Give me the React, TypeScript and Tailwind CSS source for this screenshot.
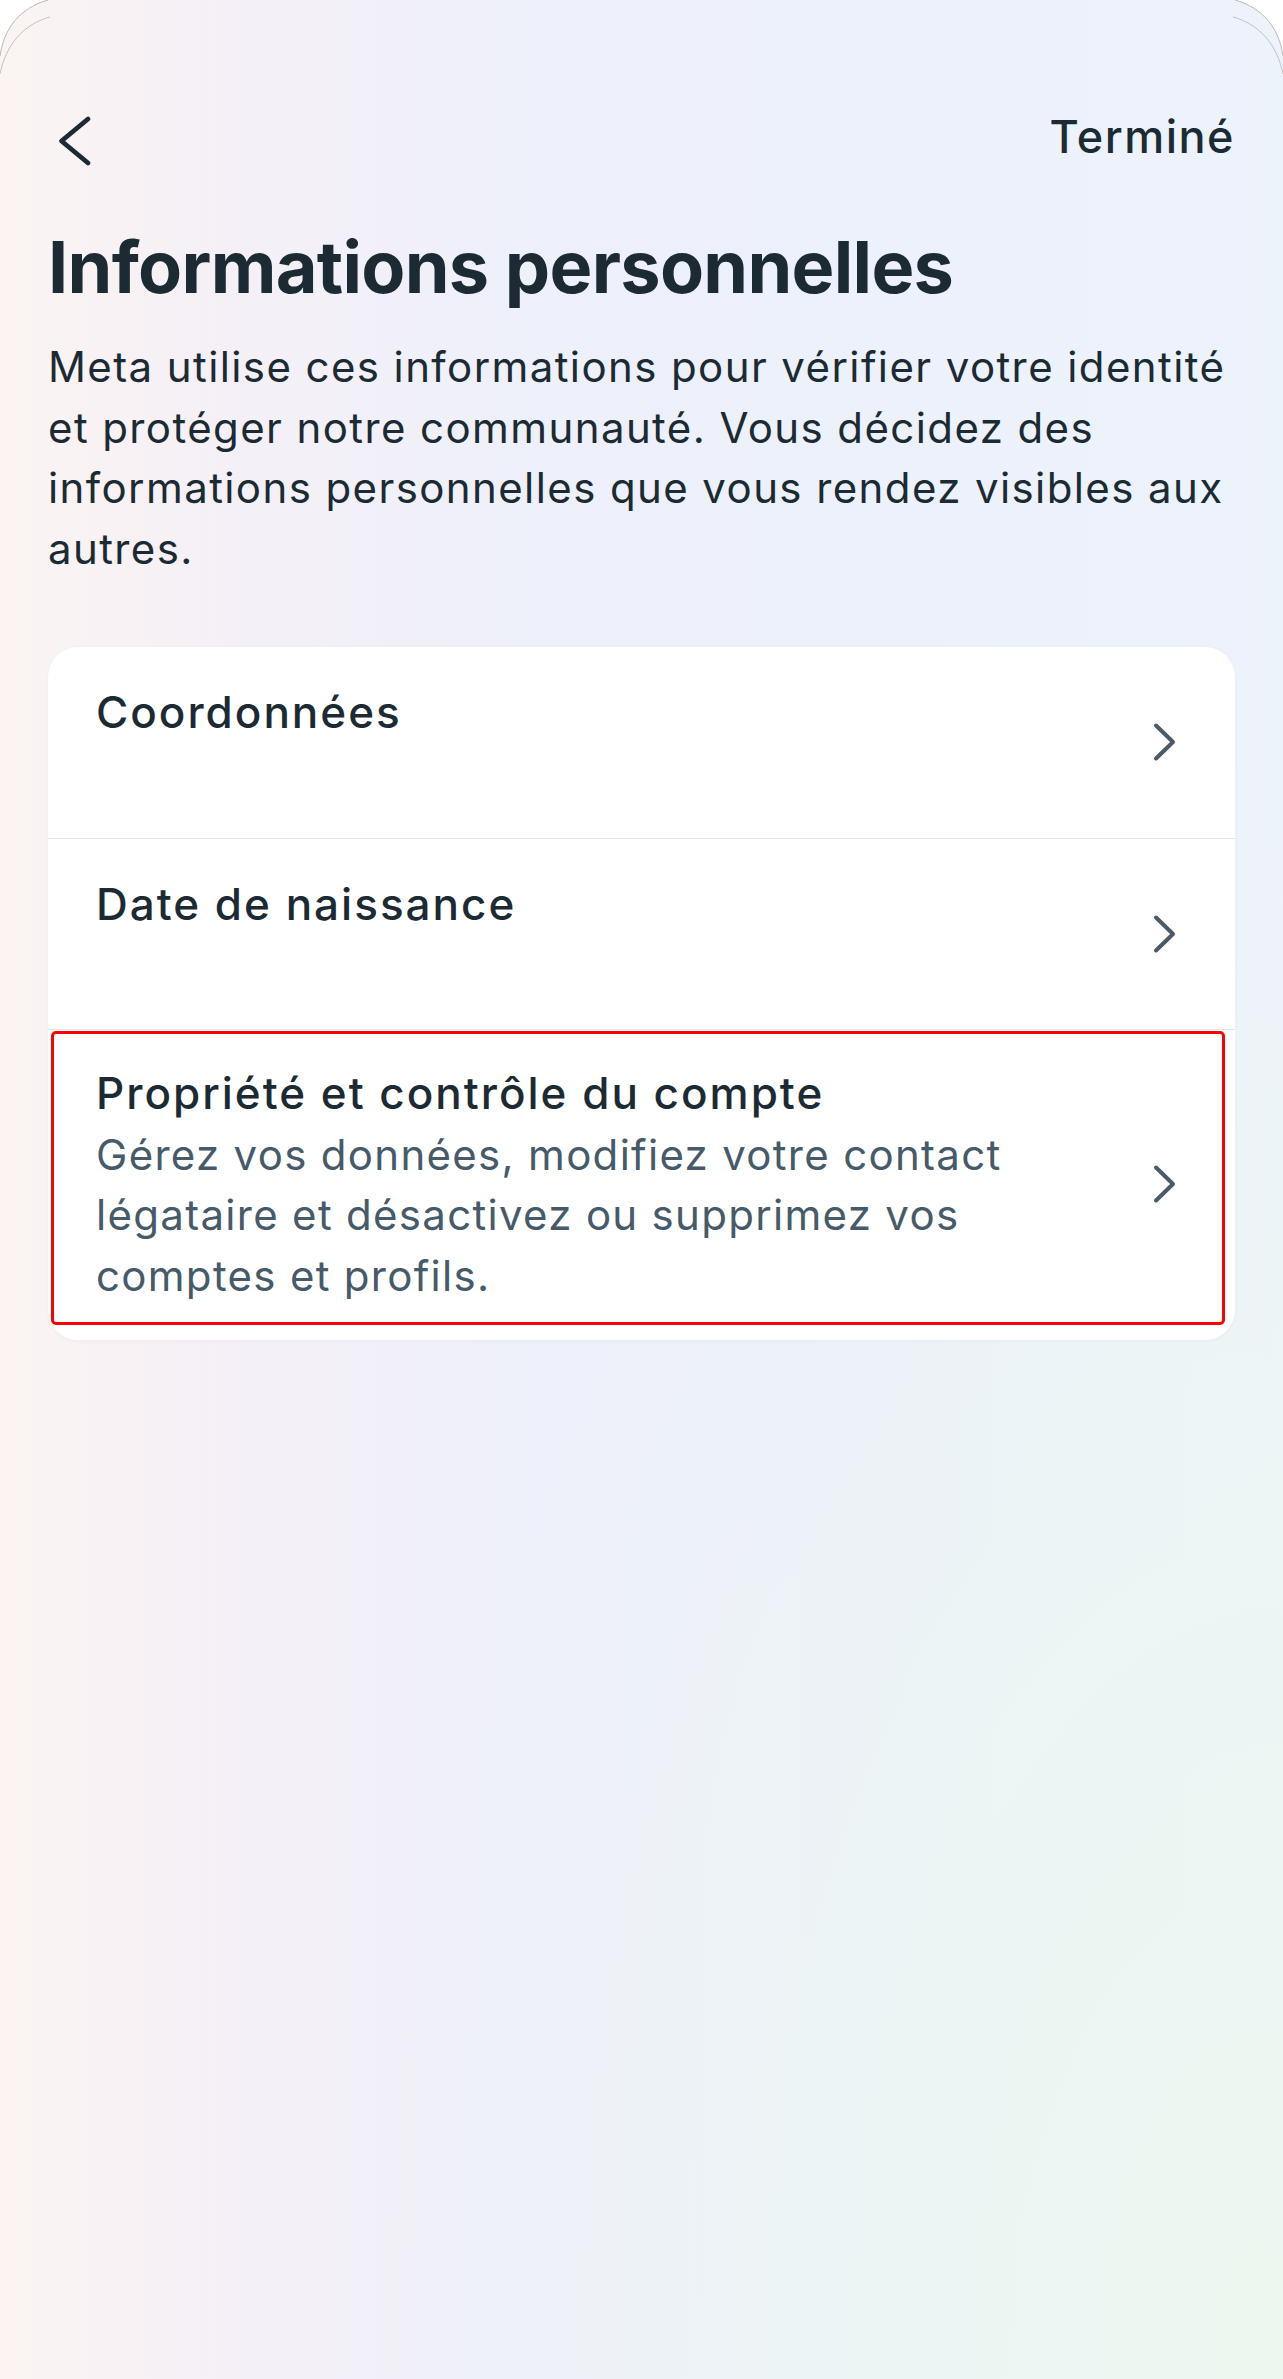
const rows = [
  { title: 'Coordonnées' },
  { title: 'Date de naissance' },
  {
    title: 'Propriété et contrôle du compte',
    lines: [
      'Gérez vos données, modifiez votre contact',
      'légataire et désactivez ou supprimez vos',
      'comptes et profils.',
    ],
    highlighted: true,
  },
];

function BackChevron() {
  return (
    <svg width="48" height="56" viewBox="0 0 48 56" fill="none" aria-hidden>
      <path d="M40 4 L13.5 26 L40 48" stroke="#1c2b33" strokeWidth="4.8" strokeLinecap="round" strokeLinejoin="round" />
    </svg>
  );
}

function RowChevron() {
  return (
    <svg width="28" height="40" viewBox="0 0 28 40" fill="none" aria-hidden>
      <path d="M5 3.5 L22 20 L5 36.5" stroke="#4b5a66" strokeWidth="4" strokeLinecap="round" strokeLinejoin="round" />
    </svg>
  );
}

function CornerArc({ right }: { right?: boolean }) {
  return (
    <svg
      width="60"
      height="80"
      viewBox="0 0 60 80"
      className={right ? 'absolute top-0 right-0 -scale-x-100' : 'absolute top-0 left-0'}
      aria-hidden
    >
      <path d="M0 0 L48 0 C20 8 4 28 0 56 Z" fill="#ffffff" />
      <path d="M48 0 C20 8 4 28 0 56" stroke="#b9b9b9" strokeWidth="1" fill="none" />
      <path d="M50 17 C24 24 6 44 0 74" stroke="#c2c2c2" strokeWidth="1" fill="none" />
    </svg>
  );
}

export default function App() {
  return (
    <div className="relative min-h-[2379px] overflow-hidden bg-[radial-gradient(ellipse_at_100%_100%,#edf7ef_0%,rgba(237,247,239,0)_50%),linear-gradient(90deg,#fbf4f2_0%,#f5f0f7_18%,#eef0fa_40%,#ecf1fb_70%,#edf3fb_100%)] font-['Inter',sans-serif] text-[#1c2b33]">
      <CornerArc />
      <CornerArc right />

      <header className="flex items-start justify-between px-[48px] pt-[109px]">
        <button className="mt-[6px]" aria-label="Retour">
          <BackChevron />
        </button>
        <span className="text-[45px] leading-[56px] font-medium tracking-[1.5px]">Terminé</span>
      </header>

      <main className="px-[48px]">
        <h1 className="mt-[53px] text-[72px] leading-[86px] font-bold tracking-[-0.7px]">
          Informations personnelles
        </h1>
        <p className="mt-[27px] text-[42px] leading-[60.7px] tracking-[1.4px] whitespace-nowrap">
          Meta utilise ces informations pour vérifier votre identité
          <br />
          et protéger notre communauté. Vous décidez des
          <br />
          informations personnelles que vous rendez visibles aux
          <br />
          autres.
        </p>

        <div className="mt-[67px] overflow-hidden rounded-[30px] bg-white shadow-[0_1px_4px_rgba(0,0,0,0.04)]">
          {rows.map((row, i) => (
            <div
              key={row.title}
              className={
                'relative flex items-center justify-between pr-[56px] pl-[48px] ' +
                (i > 0 ? 'border-t border-[#e2e4e7] ' : '') +
                (row.lines ? 'pt-[32px] pb-[34px]' : 'h-[191px]')
              }
            >
              <div className={row.lines ? '' : 'self-start pt-[34px]'}>
                <div className="text-[44px] leading-[63px] font-medium tracking-[2px]">{row.title}</div>
                {row.lines && (
                  <div className="text-[42px] leading-[60.5px] tracking-[1.3px] text-[#465a69]">
                    {row.lines.map((l) => (
                      <div key={l}>{l}</div>
                    ))}
                  </div>
                )}
              </div>
              <RowChevron />
              {row.highlighted && (
                <div className="pointer-events-none absolute top-[1px] right-[10px] bottom-[15px] left-[3px] rounded-[5px] border-[3px] border-[#ff0000]" />
              )}
            </div>
          ))}
        </div>
      </main>
    </div>
  );
}
